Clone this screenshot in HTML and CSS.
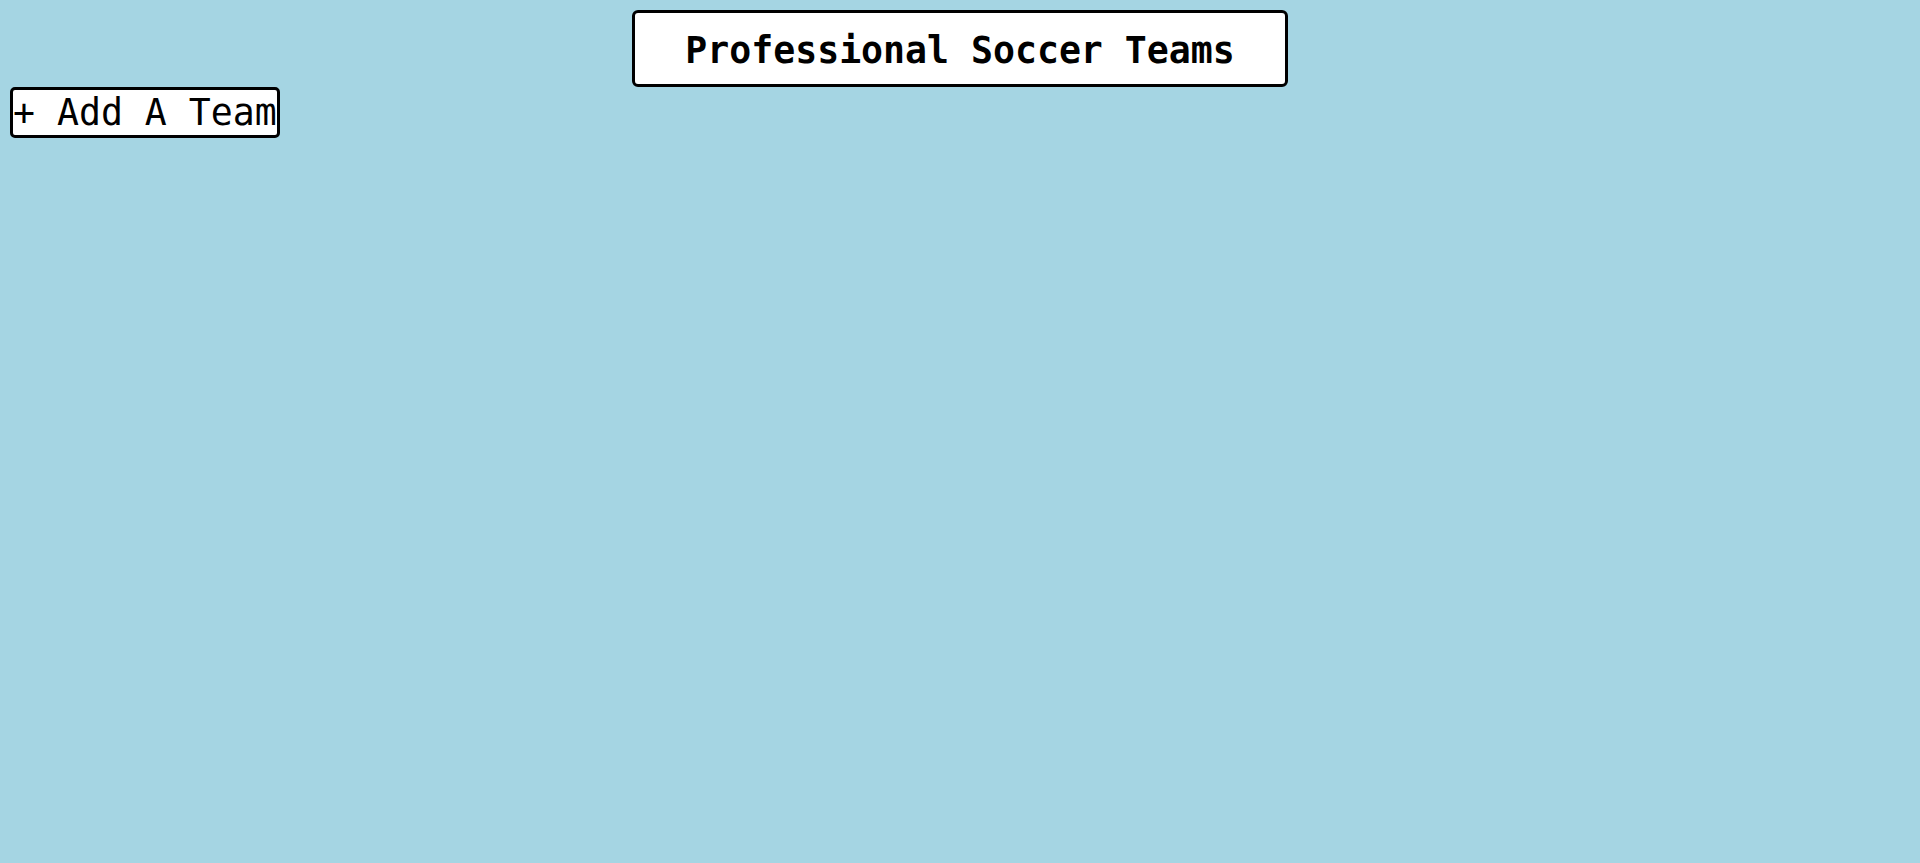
FILE: index.html
```html
<!DOCTYPE html>
<html>
<head>
<meta charset="utf-8">
<link rel="stylesheet" href="styles.css">
</head>
<body>
<header class="header">
  <h1 class="title">Professional Soccer Teams</h1>
</header>
<button class="add-btn">+ Add A Team</button>
</body>
</html>
```
FILE: styles.css
```css
html, body {
  margin: 0;
  padding: 0;
}
body {
  background: #a5d5e3;
  padding: 10px;
  font-family: "DejaVu Sans Mono", "Liberation Mono", monospace;
  min-height: 100vh;
  box-sizing: border-box;
}
.header {
  display: flex;
  justify-content: center;
}
.title {
  margin: 0;
  background: #fff;
  border: 3px solid #000;
  border-radius: 6px;
  font-size: 36.5px;
  font-weight: bold;
  line-height: 43px;
  padding: 16px 50px 12px;
  color: #000;
}
.add-btn {
  display: block;
  margin: 0;
  background: #fff;
  border: 3px solid #000;
  border-radius: 5px;
  font-family: "DejaVu Sans Mono", "Liberation Mono", monospace;
  font-size: 36.5px;
  line-height: 45px;
  padding: 0;
  color: #000;
}
```
